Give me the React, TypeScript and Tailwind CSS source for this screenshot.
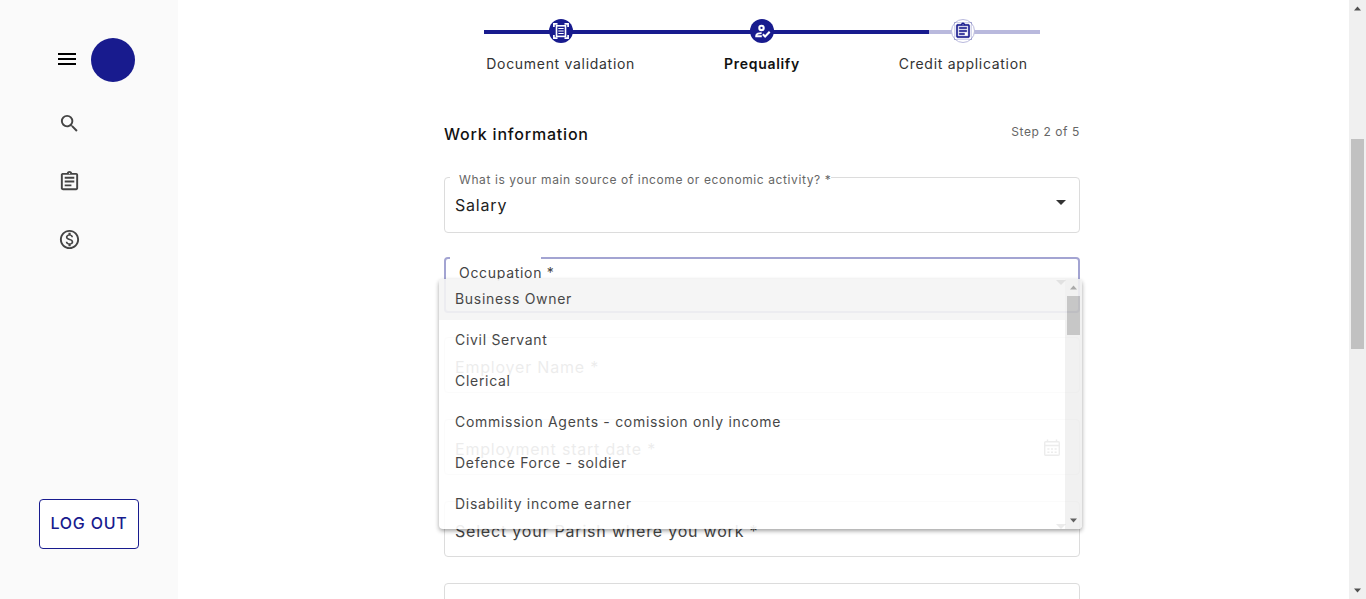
import type { ReactNode } from "react";
import {
  MdMenu,
  MdSearch,
  MdOutlineAssignment,
  MdOutlineMonetizationOn,
} from "react-icons/md";

const occupations = [
  "Business Owner",
  "Civil Servant",
  "Clerical",
  "Commission Agents - comission only income",
  "Defence Force - soldier",
  "Disability income earner",
];

function ScanIcon() {
  return (
    <svg viewBox="0 0 24 24" className="size-6" fill="none" stroke="white" aria-hidden="true">
      <path strokeWidth="1.7" d="M4.900 8V4.900h3.600M15.500 4.900h3.600V8M4.900 16v3.100h3.600M15.500 19.100h3.600V16" />
      <rect x="7.500" y="6.800" width="9" height="10.600" strokeWidth="1.6" />
      <path strokeWidth="1" d="M9.300 9.500h5.400M9.300 12h5.400M9.300 14.500h5.400" />
    </svg>
  );
}

function UserCheckIcon() {
  return (
    <svg viewBox="0 0 24 24" className="size-6" fill="none" stroke="white" aria-hidden="true">
      <circle cx="11.500" cy="8.900" r="2.200" strokeWidth="2.100" />
      <path strokeWidth="1.900" d="M11.800 17.300H6.200v-.6c0-1.800 2.800-2.600 5.400-2.600" />
      <path strokeWidth="2.100" d="M12.800 15.200l2.300 2.200 4.600-4.700" />
    </svg>
  );
}

function Step({ icon, label, state }: { icon: ReactNode; label: string; state: "done" | "current" | "next" }) {
  return (
    <li className="flex flex-1 flex-col items-center gap-[11px]">
      <span
        className={
          state === "next"
            ? "flex size-6 items-center justify-center rounded-full border border-[#b9b9dd] bg-white text-[#181b8e]"
            : "flex size-6 items-center justify-center rounded-full bg-[#181b8e]"
        }
      >
        {icon}
      </span>
      <span
        className={
          state === "current"
            ? "text-sm leading-5 font-semibold tracking-wider text-[#111]"
            : "text-sm leading-5 tracking-wider text-[#333]"
        }
      >
        {label}
      </span>
    </li>
  );
}

function Caret() {
  return (
    <svg viewBox="0 0 10 5" className="pointer-events-none absolute top-[23px] right-3.5 h-[5px] w-2.5" aria-hidden="true">
      <path d="M0 0h10L5 5z" fill="#333" />
    </svg>
  );
}

function Arrow({ up, color }: { up?: boolean; color: string }) {
  return (
    <svg viewBox="0 0 17 17" className="size-[17px]" aria-hidden="true">
      <path d={up ? "M5 10.5h7L8.5 6.5z" : "M5 6.5h7L8.5 10.5z"} fill={color} />
    </svg>
  );
}

function CalendarIcon() {
  return (
    <svg viewBox="0 0 18 18" className="size-[18px]" fill="none" stroke="#444" aria-hidden="true">
      <rect x="1.7" y="2.7" width="14.6" height="13.6" rx="1" strokeWidth="1.4" />
      <path strokeWidth="1.4" d="M1.7 6.5h14.6M4.5 0.5v2M13.5 0.5v2" />
      <path strokeWidth="1.6" strokeDasharray="2 1.6" d="M4.4 10h9.4M4.4 13.2h9.4" />
    </svg>
  );
}

function Field({ id, label, kind }: { id: string; label: string; kind: "text" | "date" | "select" }) {
  const box = "h-14 w-full appearance-none rounded border border-[#dcdcdc] bg-white px-2.5 text-base outline-none";
  return (
    <div className="relative">
      {kind === "select" ? <select id={id} className={box} /> : <input id={id} className={box} />}
      {kind === "select" && <Caret />}
      <label htmlFor={id} className="absolute top-[18px] left-[11px] text-base leading-6 tracking-wider text-[#444]">
        {label}
      </label>
      {kind === "date" && (
        <button type="button" aria-label="Open calendar" className="absolute top-5 right-[19px]">
          <CalendarIcon />
        </button>
      )}
    </div>
  );
}

function OccupationMenu() {
  return (
    <div className="absolute top-[22px] -right-0.5 -left-[5px] z-10 flex h-[250px] rounded bg-white opacity-90 shadow-[0_2px_4px_rgba(0,0,0,0.4)]">
      <ul role="listbox" aria-label="Occupation" className="flex-1 overflow-hidden rounded-l">
        {occupations.map((name, i) => (
          <li
            key={name}
            role="option"
            aria-selected={i === 0}
            className={
              i === 0
                ? "h-[41px] bg-[#f4f4f4] px-4 pt-2.5 text-sm leading-5 tracking-wider text-[#333]"
                : "h-[41px] px-4 pt-2.5 text-sm leading-5 tracking-wider text-[#333]"
            }
          >
            {name}
          </li>
        ))}
      </ul>
      <div className="flex w-[17px] flex-col items-center rounded-r bg-[#f0f0f0]" aria-hidden="true">
        <Arrow up color="#a0a0a0" />
        <div className="h-[39px] w-[13px] bg-[#c1c1c1]" />
        <div className="flex-1" />
        <Arrow color="#505050" />
      </div>
    </div>
  );
}

function Sidebar() {
  const item = "flex h-[58px] items-center text-[#444]";
  return (
    <aside className="flex w-[178px] shrink-0 flex-col bg-[#fafafa] pt-[38px] pb-[50px]">
      <div className="flex items-center gap-3 pl-[55px]">
        <button type="button" aria-label="Menu" className="pb-0.5">
          <MdMenu size={24} color="#000" />
        </button>
        <span className="size-11 rounded-full bg-[#181b8e]" />
      </div>
      <nav className="flex flex-1 flex-col pt-3 pl-[58px]">
        <a href="#search" aria-label="Search" className={item}><MdSearch size={23} /></a>
        <a href="#applications" aria-label="Applications" className={item}><MdOutlineAssignment size={23} /></a>
        <a href="#payments" aria-label="Payments" className={item}><MdOutlineMonetizationOn size={23} /></a>
      </nav>
      <button
        type="button"
        className="mx-auto h-[50px] w-[100px] rounded border border-[#181b8e] bg-white pb-0.5 text-base font-medium tracking-wider whitespace-nowrap text-[#181b8e]"
      >
        LOG OUT
      </button>
    </aside>
  );
}

export default function App() {
  return (
    <div className="flex h-screen overflow-hidden bg-white font-['Inter','Liberation_Sans',sans-serif] text-[#222]">
      <Sidebar />
      <main className="min-w-0 flex-1 overflow-hidden pt-[19px] pr-[19px] pl-4">
        <div className="mx-auto w-full max-w-[636px]">
          <div className="relative px-4">
            <div className="absolute inset-x-10 top-[11px] flex h-1 bg-[#b9b9dd]">
              <div className="w-4/5 bg-[#181b8e]" />
            </div>
            <ol className="relative flex">
              <Step state="done" label="Document validation" icon={<ScanIcon />} />
              <Step state="current" label="Prequalify" icon={<UserCheckIcon />} />
              <Step
                state="next"
                label="Credit application"
                icon={<MdOutlineAssignment size={18} stroke="currentColor" strokeWidth={0.5} />}
              />
            </ol>
          </div>

          <div className="flex items-center justify-between pt-12">
            <h1 className="text-base leading-6 font-medium tracking-wider text-[#111]">Work information</h1>
            <p className="pb-1 text-xs leading-4 tracking-wider text-[#666]">Step 2 of 5</p>
          </div>

          <form className="flex flex-col gap-[26px] pt-[31px]">
            <div className="flex flex-col gap-6">
              <div className="relative">
                <select
                  id="income"
                  className="h-14 w-full appearance-none rounded border border-[#dcdcdc] bg-white px-2.5 text-base tracking-wider outline-none"
                >
                  <option>Salary</option>
                </select>
                <label
                  htmlFor="income"
                  className="absolute -top-[5px] left-1.5 bg-white pl-[9px] text-xs leading-4 tracking-wider text-[#666]"
                >
                  What is your main source of income or economic activity? *
                </label>
                <Caret />
              </div>
              <div className="relative">
                <select
                  id="occupation"
                  className="h-14 w-full appearance-none rounded border-2 border-[#a3a4d2] bg-white px-2.5 outline-none"
                />
                <span className="absolute top-0 left-1.5 h-0.5 w-[91px] bg-white" />
                <label
                  htmlFor="occupation"
                  className="absolute top-1.5 left-[15px] text-sm leading-5 tracking-wider text-[#444]"
                >
                  Occupation *
                </label>
                <Caret />
                <OccupationMenu />
              </div>
              <Field id="employer" label="Employer Name *" kind="text" />
            </div>
            <Field id="start" label="Employment start date *" kind="date" />
            <Field id="parish" label="Select your Parish where you work *" kind="select" />
            <input
              aria-label="Work address"
              className="h-14 w-full rounded border border-[#dcdcdc] bg-white px-2.5 text-base outline-none"
            />
          </form>
        </div>
      </main>
      <div className="flex w-[17px] shrink-0 flex-col items-center bg-[#f0f0f0]" aria-hidden="true">
        <Arrow up color="#505050" />
        <div className="flex w-[13px] flex-1 flex-col">
          <div className="basis-[21.6%]" />
          <div className="basis-[37.2%] bg-[#c1c1c1]" />
        </div>
        <Arrow color="#505050" />
      </div>
    </div>
  );
}
